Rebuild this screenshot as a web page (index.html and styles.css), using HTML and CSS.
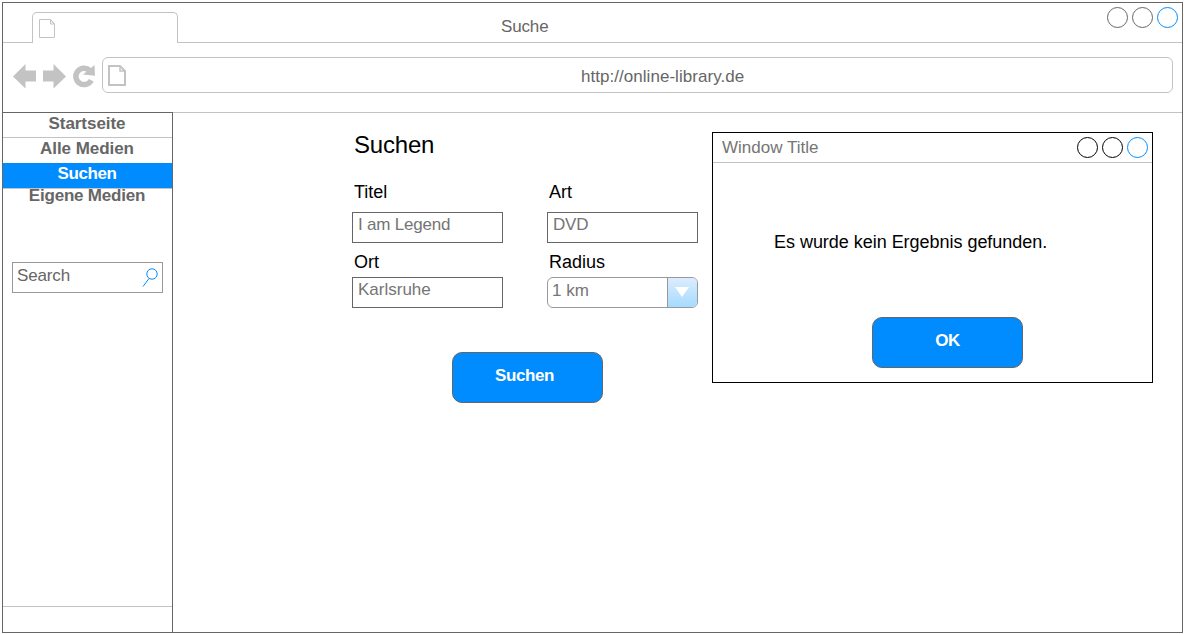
FILE: index.html
```html
<!DOCTYPE html>
<html lang="de">
<head>
<meta charset="utf-8">
<title>Suche</title>
<link rel="stylesheet" href="styles.css">
</head>
<body>
<div class="browser">
  <header class="tabstrip">
    <div class="strip-start"></div>
    <div class="tab">
      <svg class="tab-icon" width="17" height="20" viewBox="0 0 17 20"><path d="M.5.5h11l4 5v13H.5zM11.500.5v4.500h4M12 1l3.500 4"/></svg>
    </div>
    <div class="strip-rest">
      <span class="page-title">Suche</span>
      <span class="controls"><i class="dot"></i><i class="dot"></i><i class="dot dot-blue"></i></span>
    </div>
  </header>
  <div class="toolbar">
    <svg class="nav-icons" width="84" height="28" viewBox="0 0 84 28">
      <path class="solid" d="M0 14.500 12.500 2v6.500H23v11H12.500v7zM53 14.500 40.500 2v6.500H30v11h10.500v7z"/>
      <path class="reload" d="M78.300 18.300A8.200 8.200 0 1 1 76.800 8.500"/>
      <path class="solid" d="M81.500 3 82 13.700 70 12.500z"/>
    </svg>
    <div class="address">
      <svg class="page-icon" width="18" height="21" viewBox="0 0 18 21"><path d="M1 1h11l5 5v14H1z"/><path class="fold" d="M12 1v5h5"/></svg>
      <span class="url">http://online-library.de</span>
    </div>
  </div>
  <div class="body">
    <aside class="sidebar">
      <nav class="menu">
        <a class="item">Startseite</a>
        <a class="item item-plain">Alle Medien</a>
        <a class="item item-active">Suchen</a>
        <a class="item item-last">Eigene Medien</a>
      </nav>
      <div class="search">
        <span class="search-text">Search</span>
        <svg width="18" height="20" viewBox="0 0 18 20"><circle cx="11" cy="6" r="5.200"/><path d="M8 10.500 2 18.500"/></svg>
      </div>
      <div class="side-foot"></div>
    </aside>
    <main class="content">
      <section class="form">
        <h1 class="heading">Suchen</h1>
        <div class="fields">
          <label class="label">Titel</label>
          <label class="label">Art</label>
          <div class="input input-tight">I am Legend</div>
          <div class="input input-tight">DVD</div>
          <label class="label label-low">Ort</label>
          <label class="label label-low">Radius</label>
          <div class="input">Karlsruhe</div>
          <div class="select"><span class="select-value">1 km</span><span class="select-button"><svg width="14" height="10" viewBox="0 0 14 10"><path d="M0 0h14L7 10z"/></svg></span></div>
        </div>
        <div class="button submit">Suchen</div>
      </section>
      <section class="dialog">
        <div class="dialog-head">
          <span class="dialog-title">Window Title</span>
          <span class="controls controls-dark"><i class="dot"></i><i class="dot"></i><i class="dot dot-blue"></i></span>
        </div>
        <p class="message">Es wurde kein Ergebnis gefunden.</p>
        <div class="button ok">OK</div>
      </section>
    </main>
  </div>
</div>
</body>
</html>
```

FILE: styles.css
```css
* { box-sizing: border-box; }
body { margin: 0; padding: 2px 1px 1px 2px; width: 1184px; height: 634px; background: #fff; overflow: hidden; font: 17px/20px "Liberation Sans", Arial, sans-serif; color: #666; }
svg { display: block; flex: none; fill: none; stroke: #c3c3c3; }
.browser { width: 1181px; height: 631px; border: 1px solid #666; display: flex; flex-direction: column; }

.tabstrip { display: flex; height: 40px; flex: none; }
.strip-start { width: 29px; border-bottom: 1px solid #c3c3c3; }
.tab { width: 146px; margin-top: 9px; border: 1px solid #c3c3c3; border-bottom: 0; border-radius: 5px 5px 0 0; padding: 6px 0 0 6px; }
.strip-rest { flex: 1; border-bottom: 1px solid #c3c3c3; display: flex; justify-content: space-between; padding: 4px 4px 0 323px; }
.page-title { margin-top: 10px; letter-spacing: -0.15px; }
.controls { display: flex; gap: 4px; color: #666; }
.controls-dark { color: #000; }
.dot { width: 21px; height: 21px; border: 1px solid currentColor; border-radius: 50%; }
.dot-blue { color: #008cff; }

.toolbar { height: 70px; flex: none; display: flex; align-items: flex-start; padding: 14px 9px 0 10px; border-bottom: 1px solid #c3c3c3; }
.nav-icons { margin: 5px 5px 0 0; }
.solid { fill: #c3c3c3; stroke: none; }
.reload { stroke-width: 5.5; }
.address { flex: 1; height: 36px; border: 1px solid #c3c3c3; border-radius: 6px; display: flex; padding: 8px 0 0 5px; }
.page-icon { stroke-width: 2; margin-top: -1px; }
.fold { stroke-width: 1.5; }
.url { margin: 1px 0 0 455px; letter-spacing: 0.04px; }

.body { flex: 1; display: flex; }
.sidebar { width: 171px; margin: -1px 0 0 -1px; border: 1px solid #666; border-width: 1px 1px 0; display: flex; flex-direction: column; }
.menu { font-weight: 700; text-align: center; }
.item { display: block; height: 25px; line-height: 20px; border-bottom: 1px solid #c3c3c3; padding: 1px 1px 0 0; letter-spacing: -0.05px; }
.item-plain { border-bottom: 0; }
.item-active { height: 26px; background: #008cff; color: #fff; letter-spacing: -0.4px; }
.item-last { margin-top: -4px; border: 0; letter-spacing: -0.2px; }
.search { margin: 52px 9px 0; height: 31px; border: 1px solid #999; display: flex; justify-content: space-between; padding: 3px 3px 0 4px; }
.search-text { letter-spacing: -0.15px; }
.search svg { stroke: #008cff; margin-top: 2px; }
.side-foot { margin-top: auto; height: 26px; border-top: 1px solid #c3c3c3; }

.content { flex: 1; display: flex; align-items: flex-start; padding: 19px 0 0 179px; }
.form { width: 360px; flex: none; }
.heading { margin: -1px 0 0; font-size: 24px; line-height: 28px; height: 51px; font-weight: 400; color: #000; padding-left: 2px; letter-spacing: -0.2px; }
.fields { display: grid; grid-template-columns: 151px 151px; column-gap: 44px; grid-template-rows: 30px 31px 34px 31px; }
.label { font-size: 18px; line-height: 20px; color: #000; padding-left: 2px; }
.label-low { padding-top: 9px; }
.input { border: 1px solid #666; padding: 2px 0 0 5px; color: #757575; }
.input-tight { letter-spacing: -0.2px; }
.select { border: 1px solid #999; border-radius: 6px; display: flex; overflow: hidden; color: #757575; }
.select-value { flex: 1; padding: 3px 0 0 4px; }
.select-button { width: 30px; border-left: 1px solid #999; background: linear-gradient(#dcecff, #a5dbff); padding: 9px 0 0 7px; }
.select-button svg { fill: #fff; stroke: none; }
.button { width: 151px; height: 51px; border: 1px solid #666; border-radius: 10px; background: #008cff; color: #fff; font-weight: 700; text-align: center; padding: 13px 6px 0 0; letter-spacing: -0.4px; }
.submit { margin: 44px 0 0 100px; }

.dialog { width: 441px; height: 251px; flex: none; border: 1px solid #000; }
.dialog-head { height: 30px; border-bottom: 1px solid #c3c3c3; display: flex; justify-content: space-between; padding: 4px 4px 0 9px; color: #757575; }
.dialog-title { margin-top: 1px; }
.message { margin: 0; height: 154px; padding: 69px 0 0 61px; font-size: 18px; letter-spacing: -0.03px; color: #000; }
.ok { margin-left: 159px; padding-right: 0; }
```
